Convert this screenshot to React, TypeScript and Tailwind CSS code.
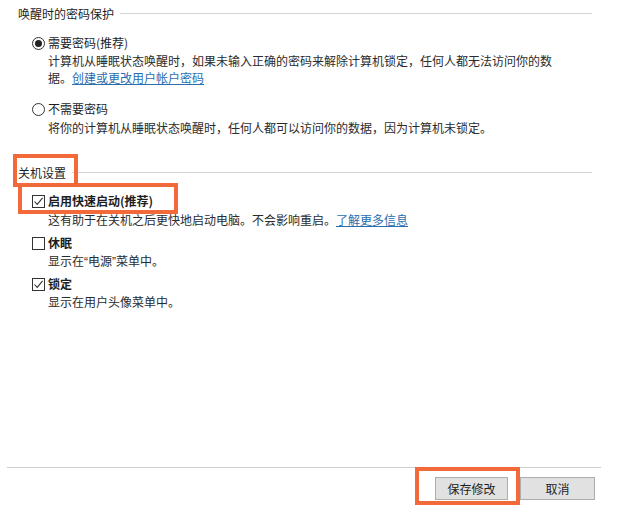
import React from "react";

function Radio({ checked }: { checked?: boolean }) {
    return (
        <span className="mr-[3px] flex h-[13px] w-[13px] shrink-0 items-center justify-center rounded-full border border-[#333]">
            {checked && <span className="h-[7px] w-[7px] rounded-full bg-[#222]" />}
        </span>
    );
}

function Check({ checked }: { checked?: boolean }) {
    return (
        <span className="mr-[3px] flex h-[13px] w-[13px] shrink-0 items-center justify-center border border-[#333] bg-white">
            {checked && (
                <svg width="11" height="11" viewBox="0 0 11 11" fill="none">
                    <path d="M1.5 5.5 L4.2 8.4 L9.6 1.8" stroke="#333" strokeWidth="1.1" />
                </svg>
            )}
        </span>
    );
}

function SectionTitle({ text }: { text: string }) {
    return (
        <div className="flex items-center pl-[18px] pr-[29px] leading-[17px]">
            <span>{text}</span>
            <span className="ml-[6px] h-px flex-1 bg-[#d4d4d4]" />
        </div>
    );
}

const latin = { fontFamily: '"Liberation Sans", sans-serif' };

export default function App() {
    return (
        <div
            className="relative flex h-[508px] w-[621px] flex-col overflow-hidden bg-white text-[12px] text-[#1e1e1e]"
            style={{ fontFamily: '"Noto Sans CJK SC", "Noto Sans", sans-serif' }}
        >
            <div className="flex-1 pt-[5px]">
                {/* 唤醒时的密码保护 */}
                <SectionTitle text="唤醒时的密码保护" />
                <div className="pl-[32px]">
                    <div className="mt-[12px] flex items-center leading-[18px]">
                        <Radio checked />
                        <span>需要密码(推荐)</span>
                    </div>
                    <div className="pl-[16px] leading-[17px] text-[#2b2b2b]">
                        <div>计算机从睡眠状态唤醒时，如果未输入正确的密码来解除计算机锁定，任何人都无法访问你的数</div>
                        <div>
                            据。<a className="text-[#2a6db0] underline">创建或更改用户帐户密码</a>
                        </div>
                    </div>

                    <div className="mt-[14px] flex items-center leading-[18px]">
                        <Radio />
                        <span>不需要密码</span>
                    </div>
                    <div className="mt-[1px] pl-[16px] leading-[17px] text-[#2b2b2b]">
                        将你的计算机从睡眠状态唤醒时，任何人都可以访问你的数据，因为计算机未锁定。
                    </div>
                </div>

                {/* 关机设置 */}
                <div className="mt-[28px]">
                    <SectionTitle text="关机设置" />
                </div>
                <div className="pl-[32px]">
                    <div className="mt-[11px] flex items-center font-bold leading-[18px]">
                        <Check checked />
                        <span>启用快速启动(推荐)</span>
                    </div>
                    <div className="mt-[1px] pl-[16px] leading-[17px] text-[#2b2b2b]">
                        这有助于在关机之后更快地启动电脑。不会影响重启。
                        <a className="text-[#2a6db0] underline">了解更多信息</a>
                    </div>

                    <div className="mt-[6px] flex items-center font-bold leading-[18px]">
                        <Check />
                        <span>休眠</span>
                    </div>
                    <div className="h-[17px] overflow-visible pl-[16px] leading-[17px] text-[#2b2b2b]">
                        显示在<span style={latin}>“</span>电源<span style={latin}>”</span>菜单中。
                    </div>

                    <div className="mt-[6px] flex items-center font-bold leading-[18px]">
                        <Check checked />
                        <span>锁定</span>
                    </div>
                    <div className="pl-[16px] leading-[17px] text-[#2b2b2b]">显示在用户头像菜单中。</div>
                </div>
            </div>

            {/* footer */}
            <div className="mx-[7px] mb-[8px] w-[594px] border-t border-[#cfcfcf] pt-[9px]">
                <div className="flex justify-end gap-[12px] pr-[6px]">
                    <button className="h-[23px] w-[73px] border border-[#adadad] bg-[#e1e1e1] text-[12px] text-[#1e1e1e]">
                        保存修改
                    </button>
                    <button className="h-[23px] w-[75px] border border-[#adadad] bg-[#e1e1e1] text-[12px] text-[#1e1e1e]">
                        取消
                    </button>
                </div>
            </div>

            {/* annotation boxes */}
            <div className="pointer-events-none absolute left-[13px] top-[154px] h-[33px] w-[65px] border-[4px] border-[#f36a3a]" />
            <div className="pointer-events-none absolute left-[18px] top-[183px] h-[31px] w-[160px] border-[4px] border-[#f36a3a]" />
            <div className="pointer-events-none absolute left-[415px] top-[467px] h-[38px] w-[105px] border-[4px] border-[#f36a3a]" />
        </div>
    );
}
